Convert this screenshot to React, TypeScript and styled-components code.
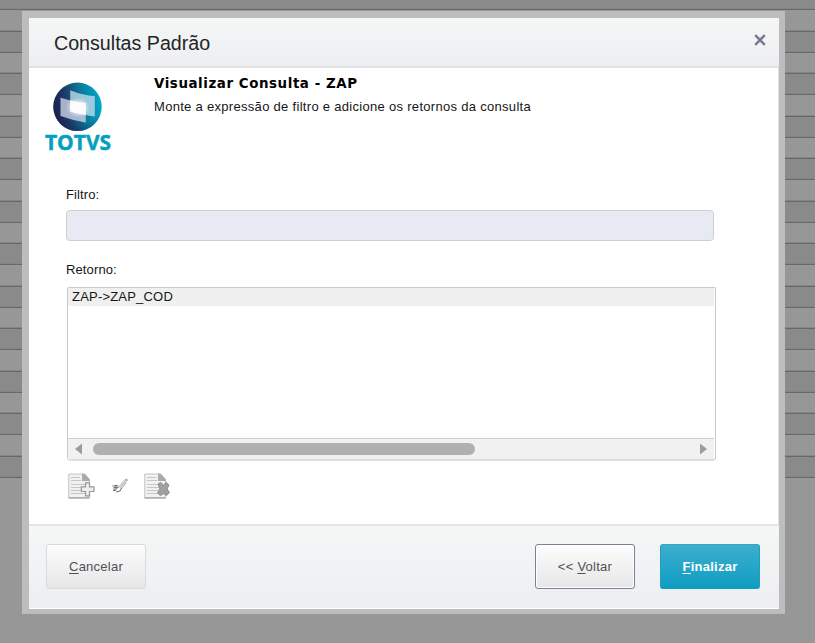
import React from "react";
import styled, { createGlobalStyle, css } from "styled-components";

const GlobalStyle = createGlobalStyle`
  * { box-sizing: border-box; }
  html, body { margin: 0; padding: 0; background: #979797; overflow: hidden; }
  body { font-family: "Liberation Sans", Arial, sans-serif; font-size: 13px; color: #161616; }
`;

const Page = styled.main`
  position: relative;
  width: 815px;
  height: 643px;
  overflow: hidden;
  background: #979797;
`;

const GridRows = styled.div`
  display: flex;
  flex-direction: column;
  margin-top: -11px;
`;

const GridRow = styled.div`
  flex: 0 0 21.26px;
  background: #979797;
  border-bottom: 1px solid #686868;
  box-shadow: inset 0 -1px 0 #858585;
  &:nth-child(odd) { background: #8a8a8a; }
`;

const Dialog = styled.section`
  position: absolute;
  left: 22px;
  top: 11px;
  width: 763px;
  height: 603px;
  display: flex;
  flex-direction: column;
  border: 6px solid #bdbdbd;
  border-left-width: 7px;
  border-top-width: 7px;
  border-bottom-width: 5px;
  background: #fff;
  box-shadow: inset -1px 0 0 #e0e0e0;
`;

const Header = styled.header`
  flex: 0 0 50px;
  display: flex;
  align-items: center;
  justify-content: space-between;
  padding: 0 13px 0 25px;
  background: linear-gradient(#f4f7f6, #edeef1);
  border-bottom: 2px solid #e0e1e3;
`;

const Title = styled.h1`
  margin: 2px 0 0;
  font-size: 20px;
  line-height: 24px;
  font-weight: 400;
  color: #242424;
`;

const TitleText = styled.span`
  display: inline-block;
  transform: scaleX(0.982);
  transform-origin: left;
`;

const CloseButton = styled.button`
  width: 12px;
  height: 12px;
  padding: 0;
  margin-top: -4px;
  border: 0;
  background: none;
  display: flex;
`;

const Intro = styled.div`
  flex: 0 0 120px;
  display: flex;
  padding: 7px 0 0 15px;
`;

const Logo = styled.svg`
  flex: 0 0 70px;
  height: 84px;
  margin-top: 2px;
  overflow: visible;
`;

const IntroText = styled.div`
  padding: 1px 0 0 40px;
`;

const Heading = styled.h2`
  margin: 0;
  font: bold 13.4px/16px "DejaVu Sans", Verdana, sans-serif;
  color: #000;
  letter-spacing: 0.57px;
`;

const Description = styled.p`
  margin: 8px 0 0;
  line-height: 14px;
  letter-spacing: 0.3px;
`;

const Form = styled.div`
  flex: 1;
  display: flex;
  flex-direction: column;
  align-items: flex-start;
  padding-left: 37px;
`;

const Label = styled.label<{ $gap: number }>`
  line-height: 14px;
  letter-spacing: 0.12px;
  margin-bottom: ${(p) => p.$gap}px;
`;

const FilterField = styled.input`
  width: 648px;
  height: 31px;
  margin-bottom: 22px;
  padding: 0 8px;
  background: #e7eaf3;
  border: 1px solid #cbcfd1;
  border-radius: 4px;
  outline: 0;
`;

const ReturnList = styled.div`
  width: 649px;
  height: 174px;
  margin-left: 1px;
  display: flex;
  flex-direction: column;
  background: #fff;
  border: 1px solid #c5caca;
  border-bottom: 2px solid #dcdddd;
  border-radius: 2px 2px 4px 4px;
`;

const ListItem = styled.div`
  height: 18px;
  padding-left: 4px;
  background: #efefef;
  line-height: 17px;
  letter-spacing: 0.2px;
  margin-right: 1px;
`;

const ScrollBar = styled.div`
  height: 21px;
  margin: auto 1px 0 0;
  display: flex;
  align-items: center;
  padding: 0 7px;
  background: #f1f1f1;
  border-top: 1px solid #cbd1d1;
`;

const Arrow = styled.svg`
  width: 7px;
  height: 12px;
`;

const Thumb = styled.div`
  width: 382px;
  height: 12px;
  margin: 0 auto 0 11px;
  border-radius: 6px;
  background: #b0b0b0;
`;

const Tools = styled.div`
  display: flex;
  align-items: center;
  padding: 12px 0 0 2px;
`;

const ToolIcon = styled.svg<{ $w: number; $gap?: number }>`
  width: ${(p) => p.$w}px;
  height: 27px;
  margin-right: ${(p) => p.$gap ?? 0}px;
`;

const Footer = styled.footer`
  flex: 0 0 85px;
  display: flex;
  align-items: flex-start;
  padding: 18px 19px 0 17px;
  background: linear-gradient(#f4f7f6, #edeef1);
  border-top: 2px solid #e3e4e4;
  border-bottom: 1px solid #fff;
`;

const variants = {
  plain: css`
    border-color: #d9dadb;
    background: linear-gradient(#fdfdfd, #e6e6e6);
    color: #505057;
  `,
  focused: css`
    border-color: #7a8293;
    box-shadow: inset 0 0 0 1px #fff;
    background: linear-gradient(#fdfdfd, #e6e6e6);
    color: #505057;
  `,
  primary: css`
    border-color: #36a3bf #229dbb #139bbd;
    background: linear-gradient(#3eaece, #0e9dc2);
    color: #fff;
    font-weight: 700;
  `,
};

const Button = styled.button<{ $variant: keyof typeof variants }>`
  width: 100px;
  height: 45px;
  padding: 0;
  border: 1px solid;
  border-radius: 3px;
  font-family: inherit;
  font-size: 13px;
  letter-spacing: 0.25px;
  ${(p) => variants[p.$variant]}
`;

const ButtonGroup = styled.div`
  display: flex;
  gap: 25px;
  margin-left: auto;
`;

const AccessKey = styled.span`
  text-decoration: underline;
  text-underline-offset: 2px;
`;

const PageShape = () => (
  <>
    <path d="M0.8 1H16L21.5 7V24.8H0.8Z" fill="#f1f1f1" stroke="#c2c2c2" />
    <path d="M0.5 25H21.5" stroke="#929292" />
    <path d="M14 0.8H17L22 6.5V8H14Z" fill="#aaa" />
    <path d="M3 4.5H12M3 7.5H13M3 11.5H17M3 14.5H15M3 17.5H15M3 20.5H17" stroke="#c6c6c6" />
  </>
);

export default function App() {
  return (
    <>
      <GlobalStyle />
      <Page>
        <GridRows>
          {Array.from({ length: 23 }, (_, i) => (
            <GridRow key={i} />
          ))}
        </GridRows>
        <Dialog>
          <Header>
            <Title>
              <TitleText>Consultas Padrão</TitleText>
            </Title>
            <CloseButton aria-label="Fechar">
              <svg width="12" height="12" viewBox="0 0 12 12">
                <path d="M1.2 1.2L10.8 10.8M10.8 1.2L1.2 10.8" stroke="#747c8b" strokeWidth="2.5" />
              </svg>
            </CloseButton>
          </Header>
          <Intro>
            <Logo viewBox="0 0 70 84" role="img" aria-label="TOTVS">
              <defs>
                <linearGradient id="globe" x1="0" y1="0.6" x2="1" y2="0.4">
                  <stop offset="0" stopColor="#211747" />
                  <stop offset="0.3" stopColor="#1d3c69" />
                  <stop offset="0.65" stopColor="#087e9d" />
                  <stop offset="1" stopColor="#00a9c8" />
                </linearGradient>
                <radialGradient id="shade" cx="0.62" cy="0.4" r="0.68">
                  <stop offset="0.6" stopColor="#173b64" stopOpacity="0" />
                  <stop offset="1" stopColor="#172452" stopOpacity="0.6" />
                </radialGradient>
                <radialGradient id="glow">
                  <stop offset="0.35" stopColor="#fff" />
                  <stop offset="1" stopColor="#fff" stopOpacity="0" />
                </radialGradient>
              </defs>
              <circle cx="33.5" cy="29.8" r="24.2" fill="url(#globe)" />
              <circle cx="33.5" cy="29.8" r="24.2" fill="url(#shade)" />
              <path d="M26.2 13.3Q39 18.5 50.8 19.3V39.5Q40 38 26.2 34.5Z" fill="#c9deee" fillOpacity="0.76" />
              <path d="M16.5 20.7Q29 25 41.8 26V45.5Q29 43.5 16.5 39Z" fill="#d3d9ea" fillOpacity="0.76" />
              <path d="M26.2 23.3Q34 25.5 41.8 26V37.9Q34 37.2 26.2 34.5Z" fill="#fff" fillOpacity="0.85" />
              <ellipse cx="34" cy="30.4" rx="12" ry="10" fill="url(#glow)" fillOpacity="0.75" />
              <text x="1" y="73.4" textLength="66" lengthAdjust="spacingAndGlyphs" fontFamily="Open Sans, sans-serif" fontSize="22" fontWeight="700" fill="#079fc0" stroke="#079fc0" strokeWidth="0.5">TOTVS</text>
            </Logo>
            <IntroText>
              <Heading>Visualizar Consulta - ZAP</Heading>
              <Description>Monte a expressão de filtro e adicione os retornos da consulta</Description>
            </IntroText>
          </Intro>
          <Form>
            <Label $gap={8} htmlFor="filtro">Filtro:</Label>
            <FilterField id="filtro" readOnly />
            <Label $gap={10}>Retorno:</Label>
            <ReturnList>
              <ListItem>ZAP-&gt;ZAP_COD</ListItem>
              <ScrollBar>
                <Arrow viewBox="0 0 7 12"><path d="M7 0.5V11.5L0 6Z" fill="#9c9c9c" /></Arrow>
                <Thumb />
                <Arrow viewBox="0 0 7 12"><path d="M0 0.5V11.5L7 6Z" fill="#9c9c9c" /></Arrow>
              </ScrollBar>
            </ReturnList>
            <Tools>
              <ToolIcon $w={27} $gap={17} viewBox="0 0 27 27" fill="none">
                <PageShape />
                <path d="M17.5 9.8H21.5V13.8H26V18.5H21.5V22.8H17.5V18.5H13.3V13.8H17.5Z" fill="#eee" stroke="#999" strokeWidth="1.2" />
              </ToolIcon>
              <ToolIcon $w={16} $gap={16} viewBox="0 0 16 27" fill="none">
                <path d="M7.5 14.5L13 8" stroke="#cecece" strokeWidth="3" />
                <path d="M9.5 15.5L14.2 9.6" stroke="#999" strokeWidth="0.9" />
                <circle cx="14.2" cy="7" r="1.6" fill="#b4b4b4" />
                <path d="M0.5 13L5.5 12.3L1.5 15L6.5 14L1 17.6L4.5 17M4 19L8 18L9.5 15" stroke="#6c6c6c" strokeWidth="1" />
              </ToolIcon>
              <ToolIcon $w={27} viewBox="0 0 27 27" fill="none">
                <PageShape />
                <path d="M14 11L16.5 9.5L19.5 12L22.2 9.5L25 12L23 16L25.5 19.5L22.5 22.5L19.5 20.5L16.5 22.5L13.5 20L16 16Z" fill="#a0a0a0" stroke="#8c8c8c" strokeLinejoin="round" />
              </ToolIcon>
            </Tools>
          </Form>
          <Footer>
            <Button $variant="plain"><AccessKey>C</AccessKey>ancelar</Button>
            <ButtonGroup>
              <Button $variant="focused">&lt;&lt; <AccessKey>V</AccessKey>oltar</Button>
              <Button $variant="primary"><AccessKey>F</AccessKey>inalizar</Button>
            </ButtonGroup>
          </Footer>
        </Dialog>
      </Page>
    </>
  );
}
